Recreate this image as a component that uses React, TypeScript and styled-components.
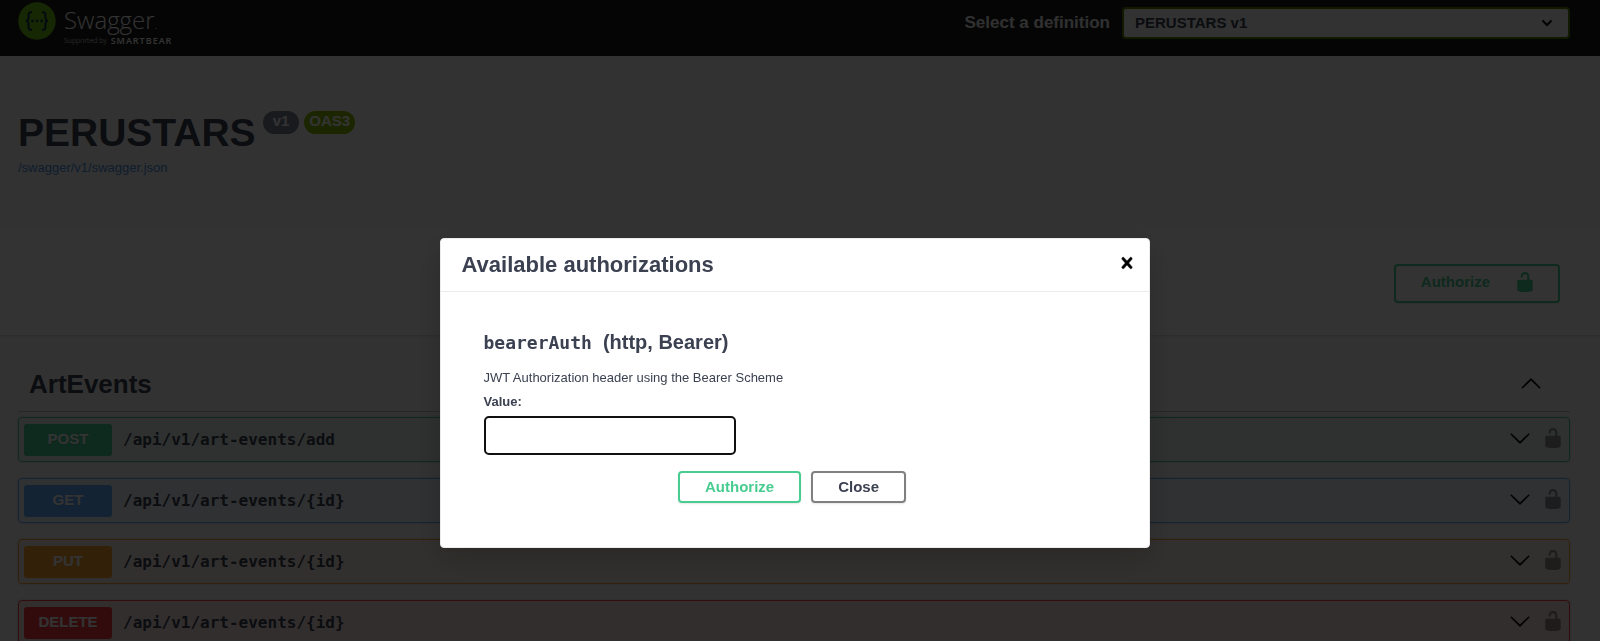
import React from 'react';
import styled, { createGlobalStyle } from 'styled-components';

const sans = '"Liberation Sans", Arial, sans-serif';
const mono = '"DejaVu Sans Mono", "Liberation Mono", monospace';
const ink = '#3b4151';

const GlobalStyle = createGlobalStyle`
  *, *::before, *::after { box-sizing: border-box; }
  body {
    margin: 0;
    background: #fafafa;
    color: ${ink};
    font-family: ${sans};
    overflow: hidden;
  }
  h1, h2, h3, h4, p { margin: 0; }
`;

const Topbar = styled.header`
  display: flex;
  align-items: flex-start;
  justify-content: space-between;
  height: 56px;
  padding: 0 30px 0 18px;
  background: #1b1b1b;
`;

const Logo = styled.a`
  display: flex;
  gap: 8px;
  padding-top: 2px;
  color: #fff;
  text-decoration: none;
  font-family: "Open Sans", sans-serif;
`;

const Wordmark = styled.span`
  display: flex;
  flex-direction: column;
  gap: 1px;
`;

const BrandName = styled.span`
  height: 34px;
  font-size: 24px;
  font-weight: 300;
  line-height: 36px;
`;

const Trademark = styled.small`
  font-size: 12px;
`;

const Tagline = styled.span`
  display: flex;
  align-items: center;
  gap: 4px;
  height: 8px;
  font-size: 7px;
  font-weight: 300;
  line-height: 8px;
`;

const Sponsor = styled.span`
  font-size: 9px;
  font-weight: 600;
  letter-spacing: 1px;
`;

const DefinitionPicker = styled.label`
  display: flex;
  align-items: center;
  gap: 12px;
  padding-top: 7px;
  color: #f0f0f0;
  font-size: 17px;
  font-weight: 700;
`;

const SelectFrame = styled.span`
  display: grid;
  width: 28vw;
`;

const Select = styled.select`
  grid-area: 1 / 1;
  height: 32px;
  padding: 0 40px 2px 11px;
  appearance: none;
  border: 2px solid #547f00;
  border-radius: 4px;
  background: #f7f7f7;
  color: ${ink};
  font: 700 15px ${sans};
`;

const SelectArrow = styled.svg`
  grid-area: 1 / 1;
  align-self: center;
  justify-self: end;
  margin-right: 17px;
  pointer-events: none;
`;

const Info = styled.section`
  height: 174px;
  padding: 54px 30px 0 18px;
`;

const TitleRow = styled.div`
  display: flex;
  align-items: flex-start;
`;

const Title = styled.h1`
  margin-right: 7px;
  font-size: 39px;
  line-height: 46px;
`;

const Badge = styled.span<{ $color: string; $pad: number }>`
  height: 23px;
  margin: 1px 5px 0 0;
  padding: 0 ${(p) => p.$pad}px;
  border-radius: 12px;
  background: ${(p) => p.$color};
  color: #fff;
  font-size: 15px;
  font-weight: 700;
  line-height: 20px;
`;

const SpecLink = styled.a`
  display: inline-block;
  margin-top: 4px;
  color: #4990e2;
  font-size: 13px;
  line-height: 16px;
  text-decoration: none;
`;

const SchemeBar = styled.section`
  display: flex;
  justify-content: flex-end;
  height: 105px;
  padding: 34px 40px 0 18px;
  background: #fff;
  box-shadow: 0 1px 2px rgba(0, 0, 0, 0.15);
`;

const Button = styled.button<{ $tone?: 'green' }>`
  display: inline-flex;
  align-items: center;
  justify-content: center;
  height: 32px;
  padding: 0 25px 2px;
  border: 2px solid ${(p) => (p.$tone === 'green' ? '#49cc90' : 'gray')};
  border-radius: 4px;
  background: transparent;
  box-shadow: 0 1px 2px rgba(0, 0, 0, 0.1);
  color: ${(p) => (p.$tone === 'green' ? '#49cc90' : ink)};
  font: 700 15px ${sans};
`;

const AuthorizeButton = styled(Button)`
  align-items: flex-start;
  gap: 24px;
  height: 39px;
  padding: 5px 22px 0 25px;
  line-height: 22px;
`;

const Operations = styled.main`
  padding: 24px 30px 0 18px;
`;

const TagHeader = styled.div`
  display: flex;
  align-items: center;
  justify-content: space-between;
  height: 53px;
  padding: 0 28px 3px 11px;
  border-bottom: 1px solid rgba(59, 65, 81, 0.3);
`;

const TagName = styled.h3`
  font-size: 26px;
  line-height: 30px;
`;

const IconButton = styled.button`
  display: inline-flex;
  padding: 0;
  border: 0;
  background: none;
  color: #000;
`;

const OperationList = styled.div`
  display: flex;
  flex-direction: column;
  gap: 16px;
  padding: 5px 0 20px;
`;

const OperationRow = styled.div<{ $color: string }>`
  display: flex;
  align-items: center;
  height: 45px;
  padding: 0 5px;
  border: 1px solid ${(p) => p.$color};
  border-radius: 4px;
  background: ${(p) => p.$color}1a;
  box-shadow: 0 0 3px rgba(0, 0, 0, 0.19);
`;

const Method = styled.span<{ $color: string }>`
  width: 88px;
  height: 32px;
  border-radius: 3px;
  background: ${(p) => p.$color};
  color: #fff;
  font-size: 15px;
  font-weight: 700;
  line-height: 30px;
  text-align: center;
  text-shadow: 0 1px 0 rgba(0, 0, 0, 0.1);
`;

const Path = styled.span`
  flex: 1;
  padding: 0 11px;
  font-family: ${mono};
  font-size: 16px;
  font-weight: 700;
`;

const RowActions = styled.span`
  display: flex;
  gap: 11px;
`;

const LockButton = styled(IconButton)`
  padding-bottom: 3px;
  opacity: 0.4;
`;

const Backdrop = styled.div`
  position: fixed;
  inset: 0;
  display: flex;
  align-items: flex-start;
  justify-content: center;
  padding: 238px 11px 0 0;
  background: rgba(0, 0, 0, 0.8);
`;

const Dialog = styled.div`
  width: 100%;
  max-width: 710px;
  border: 1px solid #ebebeb;
  border-radius: 4px;
  background: #fff;
  box-shadow: 0 10px 30px rgba(0, 0, 0, 0.2);
`;

const DialogHeader = styled.div`
  display: flex;
  align-items: center;
  justify-content: space-between;
  height: 53px;
  padding: 0 11px 0 21px;
  border-bottom: 1px solid #ebebeb;
`;

const DialogTitle = styled.h3`
  font-size: 22px;
  line-height: 26px;
`;

const CloseButton = styled(IconButton)`
  padding-bottom: 4px;
`;

const DialogBody = styled.form`
  display: flex;
  flex-direction: column;
  align-items: flex-start;
  padding: 38px 44px 44px 43px;
`;

const SchemeName = styled.h4`
  display: flex;
  align-items: baseline;
  gap: 11px;
  font-size: 20px;
  line-height: 24px;
`;

const SchemeCode = styled.code`
  font-family: ${mono};
  font-size: 18px;
`;

const Description = styled.p`
  margin-top: 15px;
  font-size: 13px;
  line-height: 16px;
`;

const ValueLabel = styled.label`
  margin-top: 8px;
  font-size: 13px;
  font-weight: 700;
  line-height: 16px;
`;

const ValueInput = styled.input`
  width: 252px;
  height: 39px;
  margin-top: 6px;
  padding: 8px 10px;
  border: 2px solid #101010;
  border-radius: 5px;
  outline: none;
  font: 15px ${sans};
`;

const DialogActions = styled.div`
  display: flex;
  align-self: center;
  gap: 10px;
  margin: 16px 4px 0 0;
`;

const Chevron = ({ up = false }: { up?: boolean }) => (
  <svg width="22" height="22" viewBox="0 0 20 20" fill="currentColor" aria-hidden="true">
    <path
      transform={up ? 'rotate(180 10 10)' : undefined}
      d="M17.418 6.109c.272-.268.709-.268.979 0s.271.701 0 .969l-7.908 7.83c-.27.268-.707.268-.979 0l-7.908-7.83c-.27-.268-.27-.701 0-.969.271-.268.709-.268.979 0L10 13.25l7.418-7.141z"
    />
  </svg>
);

const Unlocked = () => (
  <svg width="22" height="22" viewBox="0 0 20 20" fill="currentColor" aria-hidden="true">
    <path d="M15.8 8H14V5.6C14 2.703 12.665 1 10 1 7.334 1 6 2.703 6 5.6V6h2v-.801C8 3.754 8.797 3 10 3c1.203 0 2 .754 2 2.199V8H4c-.553 0-1 .646-1 1.199V17c0 .549.428 1.139.951 1.307l1.197.387C5.672 18.861 6.55 19 7.1 19h5.8c.549 0 1.428-.139 1.951-.307l1.196-.387c.524-.167.953-.757.953-1.306V9.199C17 8.646 16.352 8 15.8 8z" />
  </svg>
);

const Cross = () => (
  <svg width="22" height="22" viewBox="0 0 20 20" fill="currentColor" stroke="currentColor" strokeWidth="0.4" aria-hidden="true">
    <path d="M14.348 14.849c-.469.469-1.229.469-1.697 0L10 11.819l-2.651 3.029c-.469.469-1.229.469-1.697 0-.469-.469-.469-1.229 0-1.697l2.758-3.15-2.759-3.152c-.469-.469-.469-1.228 0-1.697s1.228-.469 1.697 0L10 8.183l2.651-3.031c.469-.469 1.228-.469 1.697 0s.469 1.229 0 1.697l-2.758 3.152 2.758 3.15c.469.469.469 1.229 0 1.698z" />
  </svg>
);

const LogoMark = () => (
  <svg width="38" height="38" viewBox="0 0 38 38" aria-hidden="true">
    <circle cx="19" cy="19" r="18.7" fill="#6fc313" />
    <g fill="none" stroke="#173647" strokeWidth="2.1">
      <path d="M14 10.2h-1c-1.7 0-2.4.8-2.4 2.4v3c0 2.1-.8 3.4-2.7 3.4 1.9 0 2.7 1.3 2.7 3.4v3c0 1.6.7 2.4 2.4 2.4h1" />
      <path d="M24 10.2h1c1.7 0 2.4.8 2.4 2.4v3c0 2.1.8 3.4 2.7 3.4-1.9 0-2.7 1.3-2.7 3.4v3c0 1.6-.7 2.4-2.4 2.4h-1" />
    </g>
    <g fill="#173647">
      <circle cx="14.4" cy="19" r="1.4" />
      <circle cx="19" cy="19" r="1.4" />
      <circle cx="23.6" cy="19" r="1.4" />
    </g>
  </svg>
);

const operations = [
  { method: 'POST', path: '/api/v1/art-events/add', color: '#49cc90' },
  { method: 'GET', path: '/api/v1/art-events/{id}', color: '#61affe' },
  { method: 'PUT', path: '/api/v1/art-events/{id}', color: '#fca130' },
  { method: 'DELETE', path: '/api/v1/art-events/{id}', color: '#f93e3e' },
];

export default function App() {
  return (
    <>
      <GlobalStyle />
      <Topbar>
        <Logo href="#">
          <LogoMark />
          <Wordmark>
            <BrandName>
              Swagger<Trademark>.</Trademark>
            </BrandName>
            <Tagline>
              Supported by <Sponsor>SMARTBEAR</Sponsor>
            </Tagline>
          </Wordmark>
        </Logo>
        <DefinitionPicker htmlFor="definition">
          Select a definition
          <SelectFrame>
            <Select id="definition">
              <option>PERUSTARS v1</option>
            </Select>
            <SelectArrow width="12" height="8" viewBox="0 0 12 8" fill="none" stroke="#000" strokeWidth="2">
              <path d="M1.5 1.5 6 6l4.5-4.5" />
            </SelectArrow>
          </SelectFrame>
        </DefinitionPicker>
      </Topbar>

      <Info>
        <TitleRow>
          <Title>PERUSTARS</Title>
          <Badge $color="#7d8492" $pad={10}>v1</Badge>
          <Badge $color="#89bf04" $pad={5}>OAS3</Badge>
        </TitleRow>
        <SpecLink href="/swagger/v1/swagger.json">/swagger/v1/swagger.json</SpecLink>
      </Info>

      <SchemeBar>
        <AuthorizeButton type="button" $tone="green">
          Authorize
          <Unlocked />
        </AuthorizeButton>
      </SchemeBar>

      <Operations>
        <TagHeader>
          <TagName>ArtEvents</TagName>
          <IconButton type="button" aria-label="Collapse ArtEvents">
            <Chevron up />
          </IconButton>
        </TagHeader>
        <OperationList>
          {operations.map((op) => (
            <OperationRow key={op.method} $color={op.color}>
              <Method $color={op.color}>{op.method}</Method>
              <Path>{op.path}</Path>
              <RowActions>
                <IconButton type="button" aria-label={`Expand ${op.method} ${op.path}`}>
                  <Chevron />
                </IconButton>
                <LockButton type="button" aria-label="Authorization">
                  <Unlocked />
                </LockButton>
              </RowActions>
            </OperationRow>
          ))}
        </OperationList>
      </Operations>

      <Backdrop>
        <Dialog role="dialog" aria-modal="true" aria-labelledby="auth-title">
          <DialogHeader>
            <DialogTitle id="auth-title">Available authorizations</DialogTitle>
            <CloseButton type="button" aria-label="Close dialog">
              <Cross />
            </CloseButton>
          </DialogHeader>
          <DialogBody onSubmit={(e) => e.preventDefault()}>
            <SchemeName>
              <SchemeCode>bearerAuth</SchemeCode>
              (http, Bearer)
            </SchemeName>
            <Description>JWT Authorization header using the Bearer Scheme</Description>
            <ValueLabel htmlFor="token">Value:</ValueLabel>
            <ValueInput id="token" type="text" />
            <DialogActions>
              <Button type="submit" $tone="green">Authorize</Button>
              <Button type="button">Close</Button>
            </DialogActions>
          </DialogBody>
        </Dialog>
      </Backdrop>
    </>
  );
}
